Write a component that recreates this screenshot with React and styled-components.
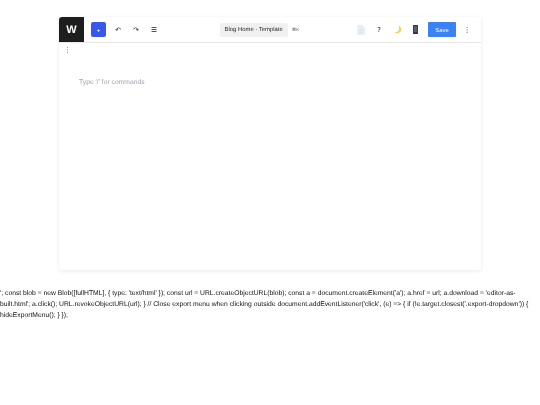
import React from "react";
import styled, { createGlobalStyle } from "styled-components";

const GlobalStyle = createGlobalStyle`
  html, body {
    margin: 0;
    padding: 0;
    background: #fff;
    font-family: "Liberation Sans", Arial, sans-serif;
    text-rendering: geometricPrecision;
  }
`;

const Page = styled.div`
  width: 540px;
  height: 405px;
  overflow: hidden;
`;

const Editor = styled.div`
  width: 422px;
  height: 253px;
  margin: 17px 0 0 59px;
  border-radius: 3px;
  box-shadow: 0 1px 4px rgba(0, 0, 0, 0.09);
  overflow: hidden;
  will-change: transform;
`;

const Toolbar = styled.header`
  height: 25px;
  display: flex;
  align-items: center;
  border-bottom: 1px solid #e8e8e8;
  box-sizing: content-box;
`;

const Logo = styled.div`
  width: 25px;
  height: 25px;
  display: flex;
  align-items: center;
  justify-content: center;
  background: #1e1e1e;
  color: #fff;
  font-size: 11px;
  font-weight: 700;
`;

const ToolGroup = styled.div`
  display: flex;
  align-items: center;
  flex: ${(p) => (p.$grow ? 1 : "none")};
  justify-content: ${(p) => (p.$grow ? "center" : "flex-start")};
  gap: ${(p) => p.$gap || 0}px;
  padding: ${(p) => p.$padding || 0};
`;

const AddButton = styled.button`
  width: 15px;
  height: 15px;
  padding: 0;
  border: 0;
  border-radius: 2px;
  background: #3858e9;
  color: #fff;
  font: 700 6px "Liberation Sans", sans-serif;
`;

const IconButton = styled.button`
  width: ${(p) => p.$w || 10}px;
  height: 12px;
  padding: 0;
  border: 0;
  background: none;
  display: flex;
  align-items: center;
  justify-content: center;
  color: #222;
  font: 6.75px "DejaVu Sans", sans-serif;
`;

const TemplateLabel = styled.div`
  height: 14px;
  padding: 0 5px;
  display: flex;
  align-items: center;
  border-radius: 2px;
  background: #f0f0f0;
  color: #2a2a2a;
  font-size: 5.9px;
  white-space: nowrap;
`;

const Shortcut = styled.span`
  margin-left: 4px;
  color: #666;
  font-size: 4.6px;
`;

const SaveButton = styled.button`
  width: 28px;
  height: 15px;
  padding: 0;
  border: 0;
  border-radius: 1px;
  background: #3b82f6;
  color: #fff;
  font: 5.9px "Liberation Sans", sans-serif;
`;

const Canvas = styled.main`
  padding: 3px 0 0 5px;
  color: #444;
  font: 6.75px/9px "DejaVu Sans", sans-serif;
`;

const Placeholder = styled.p`
  margin: 23px 0 0 15px;
  color: #9ca3af;
  font: 6.75px/9px "Liberation Sans", sans-serif;
`;

const Leak = styled.p`
  margin: 17.5px 0 0;
  color: #111;
  font-size: 6.75px;
  line-height: 11px;
  will-change: transform;
`;

const PageIcon = () => (
  <svg width="8" height="10" viewBox="0 0 8 10">
    <path d="M.7.5H5.2L7.4 2.7V9.5H.7Z" fill="#e8f0f7" stroke="#d8e3ec" strokeWidth=".5" />
    <path d="M1.8 4.5H6.2M1.8 6H6.2M1.8 7.5H6.2" stroke="#d0dbe5" strokeWidth=".5" />
  </svg>
);

const Moon = () => (
  <svg width="9" height="9" viewBox="0 0 9 9">
    <path d="M5.4.4C8 1.4 9 4 7.9 6.1C6.7 8.4 3.4 9 1 7C3.4 7.6 5 6.8 5.7 5.2C6.3 3.7 6.1 1.9 5.4.4Z" fill="#f4cf5e" />
  </svg>
);

const Phone = () => (
  <svg width="5" height="9" viewBox="0 0 5 9">
    <rect x="0" y="0" width="5" height="9" rx=".8" fill="#2b2b2b" />
    <rect x=".7" y="1" width="3.6" height="6.4" fill="#55626c" />
  </svg>
);

const leakedScript =
  "'; const blob = new Blob([fullHTML], { type: 'text/html' }); const url = URL.createObjectURL(blob); const a = document.createElement('a'); a.href = url; a.download = 'editor-as-built.html'; a.click(); URL.revokeObjectURL(url); } // Close export menu when clicking outside document.addEventListener('click', (e) => { if (!e.target.closest('.export-dropdown')) { hideExportMenu(); } });";

function App() {
  return (
    <Page>
      <GlobalStyle />
      <Editor>
        <Toolbar>
          <Logo>W</Logo>
          <ToolGroup $gap={6} $padding="0 0 0 7px">
            <AddButton>+</AddButton>
            <IconButton $w={12}>↶</IconButton>
            <IconButton $w={12}>↷</IconButton>
            <IconButton $w={12}>☰</IconButton>
          </ToolGroup>
          <ToolGroup $grow $padding="0 0 0 3px">
            <TemplateLabel>Blog Home · Template</TemplateLabel>
            <Shortcut>⌘K</Shortcut>
          </ToolGroup>
          <ToolGroup $gap={8} $padding="0 11px 0 0">
            <IconButton><PageIcon /></IconButton>
            <IconButton>?</IconButton>
            <IconButton><Moon /></IconButton>
            <IconButton><Phone /></IconButton>
            <SaveButton>Save</SaveButton>
            <IconButton $w={6}>⋮</IconButton>
          </ToolGroup>
        </Toolbar>
        <Canvas>
          ⋮
          <Placeholder>Type '/' for commands</Placeholder>
        </Canvas>
      </Editor>
      <Leak>{leakedScript}</Leak>
    </Page>
  );
}

export default App;
